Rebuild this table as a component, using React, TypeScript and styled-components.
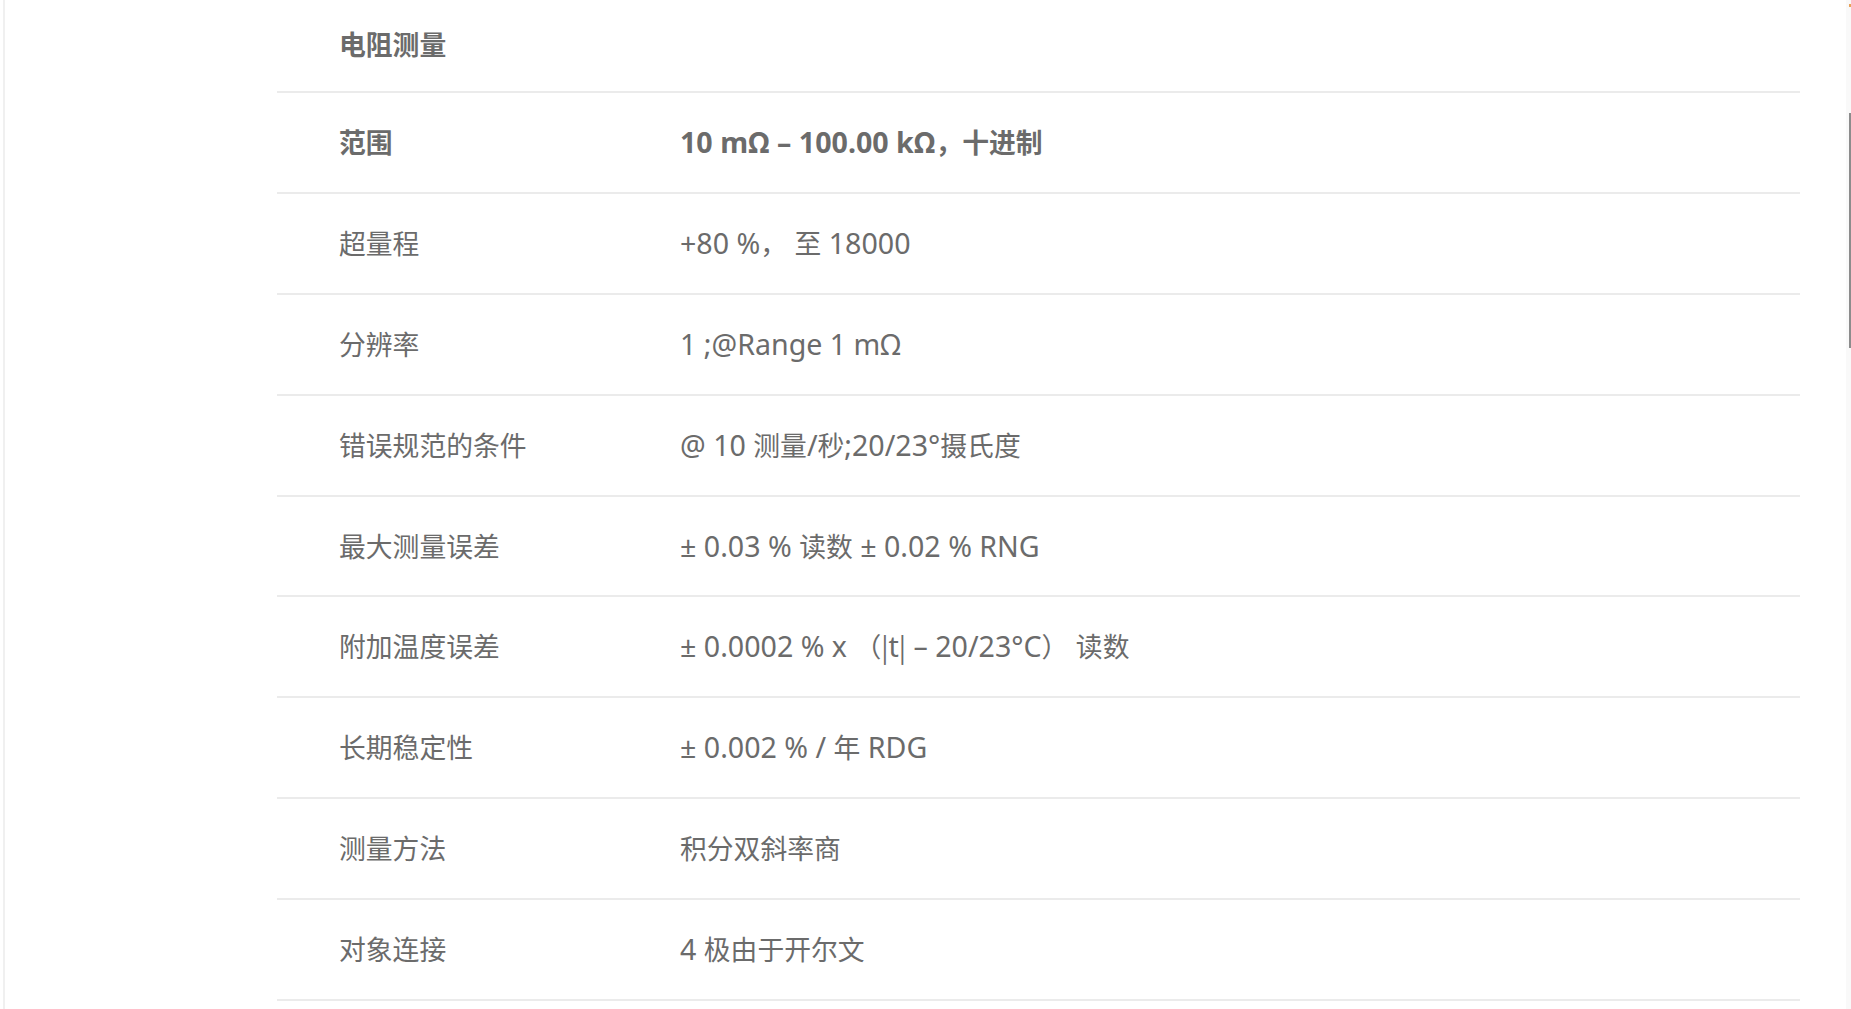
import React from "react";
import styled, { createGlobalStyle } from "styled-components";

const GlobalStyle = createGlobalStyle`
  html, body {
    margin: 0;
    padding: 0;
    background: #ffffff;
  }
  body {
    font-family: "Noto Sans", "Noto Sans CJK SC", sans-serif;
  }
`;

const Page = styled.div`
  display: flex;
  width: 1851px;
  height: 1009px;
  overflow: hidden;
  padding-left: 3px;
  box-sizing: border-box;
  background: #ffffff;
`;

const Frame = styled.div`
  flex: 1;
  display: flex;
  border-left: 2px solid #f0f0f0;
  padding-left: 272px;
`;

const Table = styled.div`
  width: 1523px;
  display: flex;
  flex-direction: column;
`;

const Row = styled.div<{ $head?: boolean }>`
  display: grid;
  grid-template-columns: 403px 1fr;
  align-items: center;
  height: ${(p) => (p.$head ? "87px" : "97.9px")};
  padding-bottom: ${(p) => (p.$head ? "4px" : "1px")};
  border-bottom: 2px solid #ebebeb;
  flex-shrink: 0;
`;

const Cell = styled.div<{ $bold?: boolean; $label?: boolean }>`
  font-family: "Noto Sans CJK SC", "Noto Sans", sans-serif;
  font-size: 26.8px;
  line-height: 38px;
  color: #6b6b6b;
  font-weight: ${(p) => (p.$bold ? 700 : 400)};
  padding-left: ${(p) => (p.$label ? "62px" : "0")};
  white-space: nowrap;
`;

const Latin = styled.span`
  font-family: "Noto Sans", "Noto Sans CJK SC", sans-serif;
  font-size: 28.6px;
`;

const Spacer = styled.div`
  flex: 1;
`;

const Track = styled.div`
  width: 5px;
  background: #f9f9f9;
  display: flex;
  flex-direction: column;
  align-items: flex-end;
  padding-top: 4px;
`;

const Dot = styled.div`
  width: 2px;
  height: 3px;
  background: #e9a25a;
`;

const Thumb = styled.div`
  width: 2px;
  height: 235px;
  margin-top: 106px;
  background: #8c8c8c;
`;

const rows: { label: string; value: string; bold?: boolean }[] = [
  { label: "范围", value: "10 mΩ – 100.00 kΩ，十进制", bold: true },
  { label: "超量程", value: "+80 %， 至 18000" },
  { label: "分辨率", value: "1 ;@Range 1 mΩ" },
  { label: "错误规范的条件", value: "@ 10 测量/秒;20/23°摄氏度" },
  { label: "最大测量误差", value: "± 0.03 % 读数 ± 0.02 % RNG" },
  { label: "附加温度误差", value: "± 0.0002 % x （|t| – 20/23°C） 读数" },
  { label: "长期稳定性", value: "± 0.002 % / 年 RDG" },
  { label: "测量方法", value: "积分双斜率商" },
  { label: "对象连接", value: "4 极由于开尔文" },
];

const CJK = /([\u3000-\u303f\u4e00-\u9fff\uff00-\uffef|]+)/;

function Mixed({ text }: { text: string }) {
  const parts = text.split(CJK).filter((p) => p.length > 0);
  return (
    <>
      {parts.map((p, i) =>
        CJK.test(p) ? (
          <React.Fragment key={i}>{p}</React.Fragment>
        ) : (
          <Latin key={i}>{p}</Latin>
        )
      )}
    </>
  );
}

export default function App() {
  return (
    <>
      <GlobalStyle />
      <Page>
        <Frame>
          <Table>
            <Row $head>
              <Cell $label $bold>
                电阻测量
              </Cell>
              <Cell />
            </Row>
            {rows.map((r) => (
              <Row key={r.label}>
                <Cell $label $bold={r.bold}>
                  {r.label}
                </Cell>
                <Cell $bold={r.bold}>
                  <Mixed text={r.value} />
                </Cell>
              </Row>
            ))}
          </Table>
          <Spacer />
          <Track>
            <Dot />
            <Thumb />
          </Track>
        </Frame>
      </Page>
    </>
  );
}
